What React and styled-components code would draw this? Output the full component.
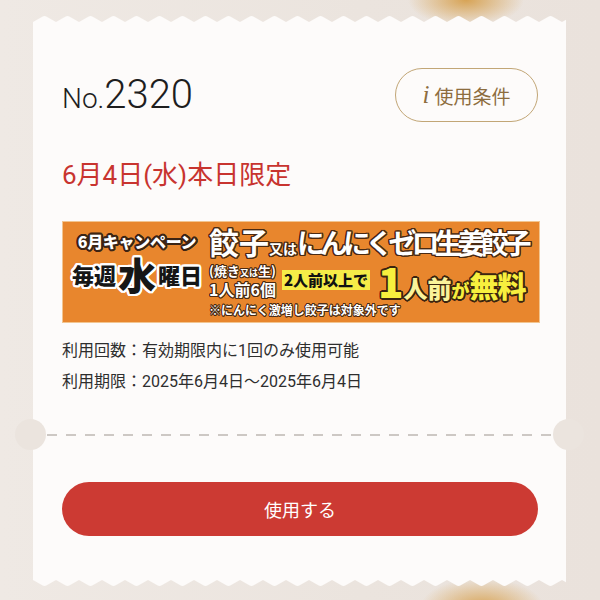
import React from 'react'
import styled, { createGlobalStyle } from 'styled-components'

const CARD = '#fdfbfa'
const BG = '#ebe4de'

// text outline built from text-shadows
const outline = (color, w) => {
  const list = []
  for (let i = 0; i < 16; i++) {
    const a = (Math.PI * 2 * i) / 16
    list.push(`${(Math.cos(a) * w).toFixed(2)}px ${(Math.sin(a) * w).toFixed(2)}px 0 ${color}`)
  }
  return list.join(', ')
}

const GlobalStyle = createGlobalStyle`
  html, body {
    margin: 0;
    padding: 0;
  }
  body {
    width: 600px;
    height: 600px;
    overflow: hidden;
    background:
      radial-gradient(ellipse 58px 26px at 466px 0px, rgba(214, 160, 78, 0.95), rgba(214, 160, 78, 0) 100%),
      radial-gradient(ellipse 62px 30px at 482px 608px, rgba(214, 160, 78, 0.95), rgba(214, 160, 78, 0) 100%),
      linear-gradient(90deg, #efe9e4 0%, #ebe4de 60%, #eae2dc 100%);
    font-family: Roboto, "Noto Sans CJK JP", sans-serif;
  }
`

const Page = styled.div`
  padding: 15px 0 0 33px;
`

const Card = styled.div`
  width: 533px;
  display: flex;
  flex-direction: column;
`

const EdgeSvg = styled.svg`
  display: block;
  transform: ${p => (p.$flip ? 'scaleY(-1)' : 'none')};
`

const Edge = ({ flip, id }) => (
  <EdgeSvg width="533" height="7" $flip={flip}>
    <defs>
      <pattern id={id} width="23" height="7" patternUnits="userSpaceOnUse">
        <path d="M0 7 L9.3 1.7 Q11.5 0.5 13.7 1.7 L23 7 Z" fill={CARD} />
      </pattern>
    </defs>
    <rect width="533" height="7" fill={`url(#${id})`} />
  </EdgeSvg>
)

const TopSection = styled.div`
  background: ${CARD};
  padding: 46px 28px 37px 29px;
`

const Header = styled.div`
  display: flex;
  justify-content: space-between;
  align-items: center;
`

const CouponNo = styled.div`
  font-family: Roboto, sans-serif;
  font-weight: 300;
  color: #1e1e1e;
  font-size: 40px;
  line-height: 1;
  small {
    font-size: 28px;
  }
`

const TermsButton = styled.button`
  width: 143px;
  height: 54px;
  box-sizing: border-box;
  border: 1.5px solid #c2a676;
  border-radius: 27px;
  background: transparent;
  color: #8d6d3e;
  font-family: "Noto Sans CJK JP", sans-serif;
  font-size: 19px;
  display: flex;
  align-items: center;
  justify-content: center;
  gap: 5px;
  padding: 0;
  i {
    font-family: "Liberation Serif", serif;
    font-size: 25px;
    font-style: italic;
    color: #8d6d3e;
  }
`

const DateLine = styled.div`
  margin-top: 38px;
  color: #c8342f;
  font-family: Roboto, "Noto Sans CJK JP", sans-serif;
  font-size: 26px;
  line-height: 30px;
`

const Banner = styled.div`
  margin-top: 31px;
  width: 478px;
  height: 102px;
  box-sizing: border-box;
  background: #e8862d;
  border: 1px solid #f2c590;
  display: grid;
  grid-template-columns: 144px 1fr;
  font-family: "Noto Sans CJK JP", sans-serif;
  font-weight: 900;
  overflow: hidden;
`

const BannerLeft = styled.div`
  display: flex;
  flex-direction: column;
  align-items: center;
  padding: 10px 0 0 4px;
`

const Campaign = styled.div`
  color: #fff;
  font-size: 16px;
  line-height: 18px;
  letter-spacing: -0.3px;
  text-shadow: ${outline('#3b2414', 2)};
`

const Weekly = styled.div`
  margin-top: 2px;
  color: #161616;
  height: 44px;
  display: flex;
  align-items: center;
  gap: 2px;
  text-shadow: ${outline('#ffffff', 2.2)};
`

const WeekChar = styled.span`
  font-size: ${p => p.$size}px;
  line-height: 44px;
`

const BannerRight = styled.div`
  padding: 3px 0 0 2px;
  display: flex;
  flex-direction: column;
`

const Title = styled.div`
  color: #fff;
  height: 32px;
  white-space: nowrap;
  text-shadow: ${outline('#4a2a12', 1.4)};
  display: flex;
  align-items: baseline;
`

const TitleText = styled.span`
  font-size: ${p => p.$size}px;
  letter-spacing: ${p => p.$ls || 0}px;
  line-height: 32px;
  font-weight: 700;
`

const OfferRow = styled.div`
  display: flex;
  align-items: center;
  height: 46px;
  white-space: nowrap;
`

const Portion = styled.div`
  color: #fff;
  font-weight: 700;
  text-shadow: ${outline('#4a2a12', 1)};
  display: flex;
  flex-direction: column;
`

const PortionLine = styled.div`
  height: 19px;
  line-height: 19px;
  display: flex;
  align-items: baseline;
`

const Small = styled.span`
  font-size: ${p => p.$size}px;
  line-height: 19px;
`

const YellowTag = styled.div`
  margin-left: 6px;
  background: #f6ec48;
  color: #111;
  font-size: 15px;
  line-height: 20px;
  padding: 0 2px;
  font-weight: 900;
`

const Free = styled.div`
  margin-left: 8px;
  text-shadow: ${outline('#3b2410', 1.6)};
  display: flex;
  align-items: baseline;
  height: 46px;
`

const FreeText = styled.span`
  font-size: ${p => p.$size}px;
  color: ${p => p.$color || '#f7ef3e'};
  letter-spacing: ${p => p.$ls || 0}px;
  line-height: 46px;
`

const Note = styled.div`
  color: #fff;
  font-size: 12px;
  height: 14px;
  line-height: 14px;
  font-weight: 700;
  white-space: nowrap;
  text-shadow: ${outline('#4a2a12', 0.8)};
`

const Info = styled.div`
  margin-top: 12px;
  color: #2e2e2e;
  font-size: 16px;
  line-height: 31px;
  font-family: Roboto, "Noto Sans CJK JP", sans-serif;
`

const Divider = styled.div`
  position: relative;
  height: 2px;
  background: ${CARD};
  padding: 0 12px 0 14px;
  &::before,
  &::after {
    content: '';
    position: absolute;
    top: -15px;
    width: 31px;
    height: 31px;
    border-radius: 50%;
    background: ${BG};
  }
  &::before {
    left: -18px;
  }
  &::after {
    right: -18px;
  }
`

const Dashes = styled.div`
  height: 2px;
  background: repeating-linear-gradient(90deg, #cdc8c4 0 10px, transparent 10px 19px);
`

const BottomSection = styled.div`
  background: ${CARD};
  padding: 46px 28px 44px 29px;
`

const UseButton = styled.button`
  width: 100%;
  height: 54px;
  border: none;
  border-radius: 27px;
  background: #cc3a33;
  color: #fff;
  font-family: "Noto Sans CJK JP", sans-serif;
  font-size: 18px;
  display: flex;
  align-items: center;
  justify-content: center;
`

const App = () => {
  return (
    <>
      <GlobalStyle />
      <Page>
        <Card>
          <Edge id="edge-top" />
          <TopSection>
            <Header>
              <CouponNo>
                <small>No.</small>2320
              </CouponNo>
              <TermsButton>
                <i>i</i>使用条件
              </TermsButton>
            </Header>
            <DateLine>6月4日(水)本日限定</DateLine>
            <Banner>
              <BannerLeft>
                <Campaign>6月キャンペーン</Campaign>
                <Weekly>
                  <WeekChar $size={22}>毎週</WeekChar>
                  <WeekChar $size={38}>水</WeekChar>
                  <WeekChar $size={22}>曜日</WeekChar>
                </Weekly>
              </BannerLeft>
              <BannerRight>
                <Title>
                  <TitleText $size={30}>餃子</TitleText>
                  <TitleText $size={14}>又は</TitleText>
                  <TitleText $size={28} $ls={-5}>にんにくゼロ生姜餃子</TitleText>
                </Title>
                <OfferRow>
                  <Portion>
                    <PortionLine>
                      <Small $size={13}>(焼き</Small>
                      <Small $size={9}>又は</Small>
                      <Small $size={13}>生)</Small>
                    </PortionLine>
                    <PortionLine>
                      <Small $size={16}>1人前6個</Small>
                    </PortionLine>
                  </Portion>
                  <YellowTag>2人前以上で</YellowTag>
                  <Free>
                    <FreeText $size={42}>1</FreeText>
                    <FreeText $size={24} $color="#faf39a">人前</FreeText>
                    <FreeText $size={18}>が</FreeText>
                    <FreeText $size={29} $ls={-1}>無料</FreeText>
                  </Free>
                </OfferRow>
                <Note>※にんにく激増し餃子は対象外です</Note>
              </BannerRight>
            </Banner>
            <Info>
              <div>利用回数：有効期限内に1回のみ使用可能</div>
              <div>利用期限：2025年6月4日〜2025年6月4日</div>
            </Info>
          </TopSection>
          <Divider>
            <Dashes />
          </Divider>
          <BottomSection>
            <UseButton>使用する</UseButton>
          </BottomSection>
          <Edge id="edge-bottom" flip />
        </Card>
      </Page>
    </>
  )
}

export default App
